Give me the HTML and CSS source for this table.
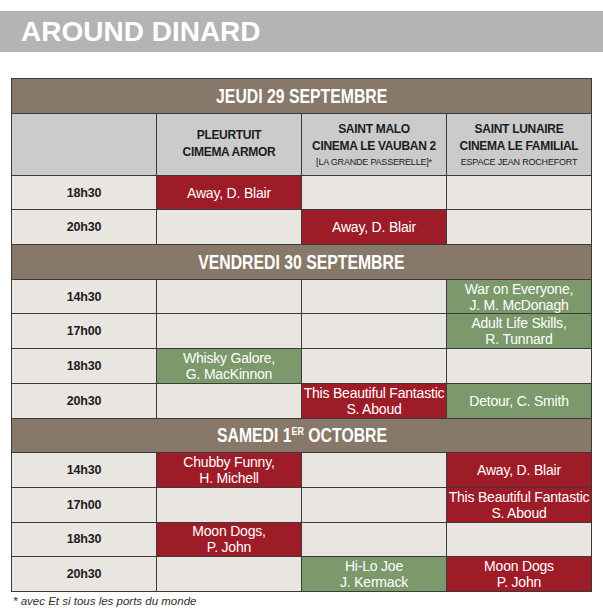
FILE: index.html
```html
<!DOCTYPE html>
<html lang="fr">
<head>
<meta charset="utf-8">
<title>Around Dinard</title>
<link rel="stylesheet" href="styles.css">
</head>
<body>
<div class="page">
  <h1 class="band">AROUND DINARD</h1>

  <div class="schedule">
    <div class="day"><span class="day-label">JEUDI 29 SEPTEMBRE</span></div>

    <div class="venue"></div>
    <div class="venue">
      <span class="venue-line">PLEURTUIT</span>
      <span class="venue-line">CIMEMA ARMOR</span>
    </div>
    <div class="venue">
      <span class="venue-line">SAINT MALO</span>
      <span class="venue-line">CINEMA LE VAUBAN 2</span>
      <span class="venue-sub">[LA GRANDE PASSERELLE]*</span>
    </div>
    <div class="venue">
      <span class="venue-line">SAINT LUNAIRE</span>
      <span class="venue-line">CINEMA LE FAMILIAL</span>
      <span class="venue-sub">ESPACE JEAN ROCHEFORT</span>
    </div>

    <div class="time">18h30</div>
    <div class="cell red">Away, D. Blair</div>
    <div class="cell"></div>
    <div class="cell"></div>

    <div class="time">20h30</div>
    <div class="cell"></div>
    <div class="cell red">Away, D. Blair</div>
    <div class="cell"></div>

    <div class="day"><span class="day-label">VENDREDI 30 SEPTEMBRE</span></div>

    <div class="time">14h30</div>
    <div class="cell"></div>
    <div class="cell"></div>
    <div class="cell green">War on Everyone,<br>J. M. McDonagh</div>

    <div class="time">17h00</div>
    <div class="cell"></div>
    <div class="cell"></div>
    <div class="cell green">Adult Life Skills,<br>R. Tunnard</div>

    <div class="time">18h30</div>
    <div class="cell green">Whisky Galore,<br>G. MacKinnon</div>
    <div class="cell"></div>
    <div class="cell"></div>

    <div class="time">20h30</div>
    <div class="cell"></div>
    <div class="cell red">This Beautiful Fantastic<br>S. Aboud</div>
    <div class="cell green">Detour, C. Smith</div>

    <div class="day"><span class="day-label">SAMEDI 1<sup class="sup">ER</sup> OCTOBRE</span></div>

    <div class="time">14h30</div>
    <div class="cell red">Chubby Funny,<br>H. Michell</div>
    <div class="cell"></div>
    <div class="cell red">Away, D. Blair</div>

    <div class="time">17h00</div>
    <div class="cell"></div>
    <div class="cell"></div>
    <div class="cell red">This Beautiful Fantastic<br>S. Aboud</div>

    <div class="time">18h30</div>
    <div class="cell red">Moon Dogs,<br>P. John</div>
    <div class="cell"></div>
    <div class="cell"></div>

    <div class="time">20h30</div>
    <div class="cell"></div>
    <div class="cell green">Hi-Lo Joe<br>J. Kermack</div>
    <div class="cell red">Moon Dogs<br>P. John</div>
  </div>

  <p class="note">* avec Et si tous les ports du monde</p>
</div>
</body>
</html>
```

FILE: styles.css
```css
* {
  box-sizing: border-box;
}

html, body {
  margin: 0;
  padding: 0;
  background: #ffffff;
}

body {
  font-family: "Liberation Sans", Arial, sans-serif;
  color: #1c1c1c;
}

.page {
  width: 603px;
  padding-top: 11px;
}

.band {
  margin: 0;
  height: 41px;
  padding-left: 21px;
  background: #b4b4b4;
  color: #ffffff;
  font-size: 28px;
  font-weight: bold;
  line-height: 41px;
}

.schedule {
  display: grid;
  grid-template-columns: repeat(4, 144px);
  grid-template-rows: 33.7px 61px;
  grid-auto-rows: 33.7px;
  gap: 1px;
  padding: 1px;
  width: max-content;
  margin: 26px 0 0 11px;
  background: #3b3b3b;
}

.day {
  grid-column: 1 / -1;
  background: #877869;
  color: #ffffff;
  display: flex;
  align-items: center;
  justify-content: center;
}

.day-label {
  display: inline-block;
  font-size: 19.5px;
  font-weight: bold;
  line-height: 20px;
  white-space: nowrap;
  transform: scaleX(0.81);
}

.sup {
  font-size: 11px;
  vertical-align: 7px;
  line-height: 0;
}

.venue {
  background: #cbcbcb;
  display: flex;
  flex-direction: column;
  align-items: center;
  justify-content: center;
  text-align: center;
}

.venue-line {
  font-size: 12px;
  font-weight: bold;
  letter-spacing: -0.3px;
  line-height: 17.5px;
  white-space: nowrap;
}

.venue-sub {
  font-size: 9px;
  letter-spacing: -0.2px;
  line-height: 12px;
  white-space: nowrap;
}

.time {
  background: #e9e5e0;
  display: flex;
  align-items: center;
  justify-content: center;
  font-size: 12.5px;
  font-weight: bold;
  letter-spacing: -0.2px;
}

.cell {
  background: #e9e5e0;
  display: flex;
  align-items: center;
  justify-content: center;
  text-align: center;
  color: #ffffff;
  font-size: 14px;
  letter-spacing: -0.2px;
  line-height: 16px;
  white-space: nowrap;
}

.cell.red {
  background: #9e1b28;
}

.cell.green {
  background: #7b996b;
}

.note {
  margin: 2.5px 0 0 13px;
  font-size: 11.5px;
  font-style: italic;
  line-height: 14px;
  color: #2e2e2e;
}
```
